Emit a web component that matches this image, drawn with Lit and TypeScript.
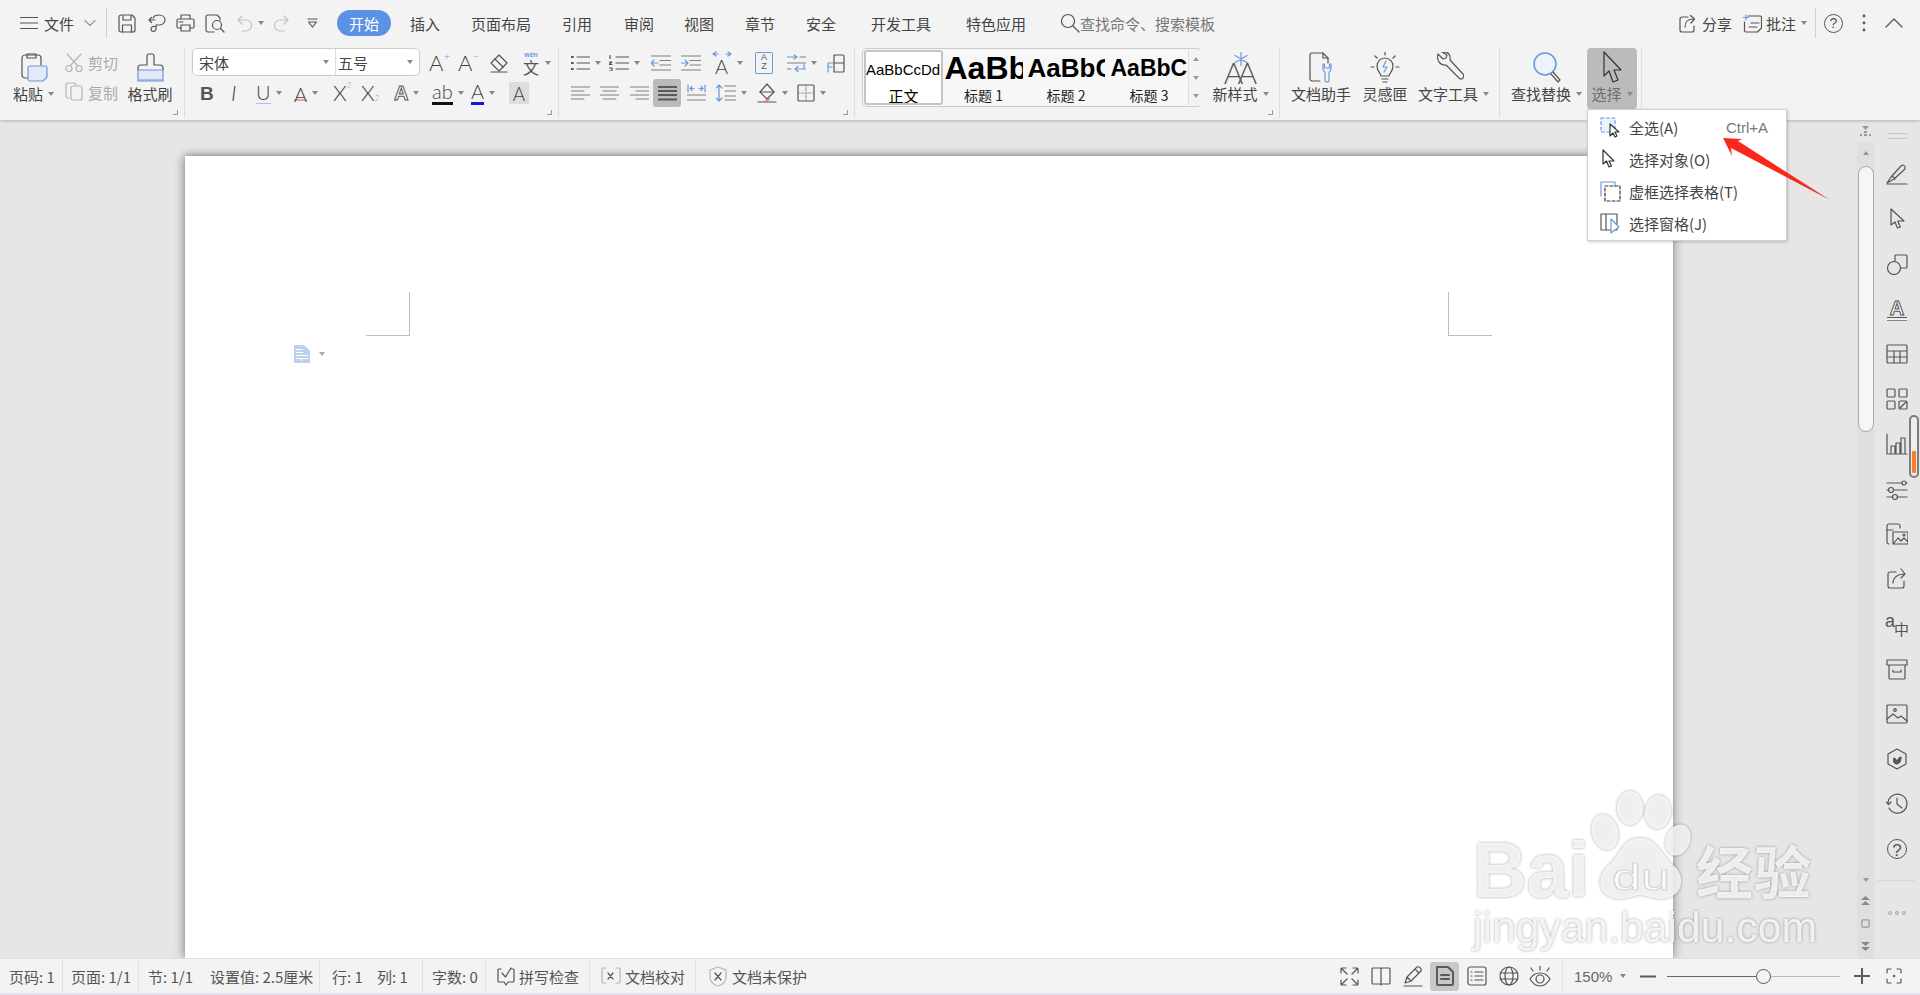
import { LitElement, html, css, svg } from "lit";
import { customElement } from "lit/decorators.js";

const I = (w: number, h: number, body: unknown) =>
  html`<svg class="i" width=${w} height=${h} viewBox="0 0 ${w} ${h}">${body}</svg>`;
const drop = html`<i class="drop"></i>`;
const drop0 = html`<i class="drop d0"></i>`;
const cell = (w: number, c: unknown, d = false, cls = "") =>
  html`<span class="cell ${cls}" style="width:${w}px">${c}${d ? drop : ""}</span>`;
const sit = (w: number, cls: string, c: unknown) =>
  html`<span class="sitem ${cls}" style="width:${w}px">${c}</span>`;

/* title bar */
const icMenu = I(18, 14, svg`<path d="M0 1.5h18M0 7h18M0 12.5h18"/>`);
const icChev = I(12, 8, svg`<path class="g2" d="M1 1.5l5 5 5-5"/>`);
const icSave = I(18, 19, svg`<path d="M1 3a2 2 0 0 1 2-2h11l3 3v12a2 2 0 0 1-2 2H3a2 2 0 0 1-2-2Z"/><path d="M5 1.5V6h8V1.500M4.500 18v-7h9v7"/>`);
const icSend = I(18, 19, svg`<path d="M5 4c1-2 3-3 6-3 3.500 0 6 2 6 5s-3 5-6 5H8v4a2.500 2.500 0 1 1-2-2.500h2"/><path d="M1 6h6M3.500 3.500L1 6l2.500 2.500"/>`);
const icPrint = I(19, 18, svg`<path d="M5 5V1h9v4M5 14H2.500A1.500 1.500 0 0 1 1 12.500v-6A1.500 1.500 0 0 1 2.500 5h14A1.500 1.500 0 0 1 18 6.500v6a1.500 1.500 0 0 1-1.500 1.500H14"/><path d="M5 11h9v6H5ZM3 8h4"/>`);
const icPrev = I(20, 19, svg`<path d="M9 18H3a2 2 0 0 1-2-2V3a2 2 0 0 1 2-2h9l3 3v2"/><circle cx="12" cy="11" r="4.500"/><path d="M15.500 14.500l3.500 3.500"/>`);
const icUndo = I(15, 17, svg`<path class="g3" d="M5 1L1 5l4 4M1 5h8a5 5 0 0 1 0 11H5"/>`);
const icRedo = I(15, 17, svg`<path class="g3" d="M10 1l4 4-4 4M14 5H6a5 5 0 0 0 0 11h4"/>`);
const icCust = I(11, 11, svg`<path d="M1 1h9M1.500 4h8L5.500 9Z"/>`);
const icSearch = I(20, 20, svg`<circle cx="8" cy="8" r="6.500"/><path d="M13 13l6 6"/>`);
const icShare = I(18, 19, svg`<path d="M9 3H3a2 2 0 0 0-2 2v11a2 2 0 0 0 2 2h10a2 2 0 0 0 2-2v-4"/><path d="M6 13c0-5 3-8 8-8M11.500 1.500L15.500 5 12 9"/>`);
const icNote = I(19, 19, svg`<path d="M5 2h12a1.500 1.500 0 0 1 1.500 1.500V14l-4 4H3a1.500 1.500 0 0 1-1.500-1.500V8"/><path d="M8 9h8M6 13h8"/><path class="b" d="M3 1v5M.5 3.500h5"/>`);
const icHelp = html`<span class="circ">?</span>`;
const icKebab = I(4, 18, svg`<circle class="fd" cx="2" cy="2" r=".8"/><circle class="fd" cx="2" cy="9" r=".8"/><circle class="fd" cx="2" cy="16" r=".8"/>`);
const icUp = I(18, 10, svg`<path d="M1 9l8-8 8 8"/>`);

/* ribbon big */
const icPaste = I(28, 29, svg`<path d="M13 25H5a3 3 0 0 1-3-3V5a3 3 0 0 1 3-3h13a3 3 0 0 1 3 3v7"/><path d="M7 5V1h9v4Z"/><path class="b fl" d="M8 15a2 2 0 0 1 2-2h15a2 2 0 0 1 2 2v9l-4 4H10a2 2 0 0 1-2-2Z"/>`);
const icBrush = I(27, 29, svg`<path d="M1 17v-2a3 3 0 0 1 3-3h6V3a2 2 0 0 1 2-2h3a2 2 0 0 1 2 2v9h6a3 3 0 0 1 3 3v2"/><path class="b fl" d="M1 17h25v10H1Z"/><path class="b" d="M0 28h27"/>`);
const icStyleNew = html`<span class="newst">${I(14, 14, svg`<path class="b" d="M7 0v14M1 3.500l12 7M13 3.500l-12 7"/>`)}<span class="aa"><span>A</span><span>A</span></span></span>`;
const icAssist = I(26, 31, svg`<path d="M12 29H4a2 2 0 0 1-2-2V3a2 2 0 0 1 2-2h11l5 5v5"/><path d="M15 1v5h5"/><path class="b" d="M15 12v5a3 3 0 0 0 2 3v8a2 2 0 0 0 4 0v-8a3 3 0 0 0 2-3v-5l-1.500 0v4h-5v-4Z"/>`);
const icBulb = I(30, 31, svg`<path d="M15 0v3M5 4l2 2M25 4l-2 2M1 15h3M26 15h3"/><path d="M11 24c0-3-4-4-4-10a8 8 0 0 1 16 0c0 6-4 7-4 10Z"/><path d="M12 27h6M13 30h4"/><path class="b" d="M16 9l-3 6h4l-3 5"/>`);
const icWrench = I(29, 31, svg`<path d="M3 2l5 5 3-1 1-3-5-3c6-1 9 3 8 8l13 14c1 2 1 3 0 4s-3 2-4 0L11 13C6 14 1 9 3 2Z"/>`);
const icFind = I(29, 31, svg`<circle class="b flp" cx="12" cy="12" r="11"/><path d="M20 20l7 8-2 2-7-8"/>`);
const icCursorBig = I(20, 33, svg`<path class="dk" d="M2 1v24l5-5 4 11 5-2-4-10h7Z"/>`);

/* small left */
const icCut = I(18, 19, svg`<g class="g2s"><path d="M2 1l11 12M16 1L5 13"/><circle cx="4" cy="15.500" r="3"/><circle cx="14" cy="15.500" r="3"/></g>`);
const icCopy = I(18, 20, svg`<g class="g2s"><path d="M5 16H3a2 2 0 0 1-2-2V3a2 2 0 0 1 2-2h6a2 2 0 0 1 2 2"/><path d="M6 6a2 2 0 0 1 2-2h7a2 2 0 0 1 2 2v10a2 2 0 0 1-2 2H8a2 2 0 0 1-2-2Z"/></g>`);
const icErase = I(20, 20, svg`<path d="M2 10l8-8 8 8-8 8Z"/><path d="M6 6l8 8M2 19h16"/>`);

const gl = (t: string, cls = "") => html`<span class="g ${cls}">${t}</span>`;
const gA = (t: string, sup: string, cls = "") => html`<span class="g ${cls}">${t}<span class="sup">${sup}</span></span>`;
const wen = html`<span class="wen"><b>wén</b><span>文</span></span>`;
const under = (t: string, c: string, cls = "") => html`<span class="ul ${c}"><span class="g ${cls}">${t}</span></span>`;

const alignL = I(19, 14, svg`<path class="g2s2" d="M0 1h19M0 5h13M0 9h19M0 13h13"/>`);
const alignC = I(19, 14, svg`<path class="g2s2" d="M0 1h19M3 5h13M0 9h19M3 13h13"/>`);
const alignR = I(19, 14, svg`<path class="g2s2" d="M0 1h19M6 5h13M0 9h19M6 13h13"/>`);
const alignJ = I(19, 15, svg`<path class="th" d="M0 1h19M0 5h19M0 9h19M0 13.500h19"/>`);
const alignD = I(19, 18, svg`<path class="b" d="M1 1v7M18 1v7M3 4.500h4M12 4.500h4M3 4.500l2-2M3 4.500l2 2M16 4.500l-2-2M16 4.500l-2 2"/><path class="g2s2" d="M0 11h19M0 16h19"/>`);
const icBullet = I(19, 16, svg`<path d="M6 2h13M6 8h13M6 14h13"/><path class="th" d="M0 2h2M0 8h2M0 14h2"/>`);
const icNum = I(20, 16, svg`<path d="M7 2h13M7 8h13M7 14h13"/><path d="M1 .5v3M0 7h3l-3 2.500h3M0 13h3v3H0"/>`);
const icIndL = I(20, 16, svg`<path class="g2s2" d="M0 1h20M9 5.500h11M9 10h11M0 15h20"/><path class="b" d="M7 8H0M3 5L0 8l3 3"/>`);
const icIndR = I(20, 16, svg`<path class="g2s2" d="M0 1h20M9 5.500h11M9 10h11M0 15h20"/><path class="b" d="M0 8h7M4 5l3 3-3 3"/>`);
const icDirA = html`<span class="dira">${I(20, 6, svg`<path class="b" d="M1 3l3-2M1 3l3 2M1 3h5M19 3l-3-2M19 3l-3 2M19 3h-5"/>`)}<span class="g">A</span></span>`;
const icSort = html`<span class="sort"><b>A</b><b>Z</b></span>`;
const icWrap = I(19, 19, svg`<path class="b" d="M0 3h10M7 1l3 2-3 2M19 15H8M11 12.500L8 15l3 2.500M17 15V10"/><path class="g2s2" d="M13 3h6M0 9h19M0 15h4"/>`);
const icTblL = I(18, 19, svg`<path d="M7 1h9a1 1 0 0 1 1 1v15a1 1 0 0 1-1 1H7M7 1v17M7 9h10"/><path class="b" d="M6 9H1v9M1 13h4"/>`);
const icSpace = I(20, 18, svg`<path class="b" d="M3 1v16M0 4l3-3 3 3M0 14l3 3 3-3"/><path class="g2s2" d="M9 2h11M9 7h11M9 12h11M9 16h11"/>`);
const icShade = I(20, 20, svg`<path d="M10 1l7 8-7 7-7-7Z"/><path d="M3 9h14"/><path d="M1 19h18"/><path class="r" d="M8 19l4-3"/>`);
const icBorder = I(18, 18, svg`<path d="M2 1h14a1 1 0 0 1 1 1v14a1 1 0 0 1-1 1H2a1 1 0 0 1-1-1V2a1 1 0 0 1 1-1Z"/><path class="dash" d="M9 1v16M1 9h16"/>`);

/* menu */
const mAll = I(21, 21, svg`<path class="b dash2 flb" d="M1 1h14v14H1Z"/><path class="dk wfill" d="M10 7v12l3-3 2 4 2-1-2-4h4Z"/>`);
const mObj = I(18, 20, svg`<path class="dk" d="M3 1v14l3.500-3L9 18l2.500-1-2.500-5h5Z"/>`);
const mTbl = I(21, 21, svg`<path class="b" d="M1 15V1h14v4"/><path class="dk dash3" d="M5 5h15v15H5Z"/>`);
const mPane = I(21, 21, svg`<path d="M1 1h16v16H1ZM6 1v16"/><path class="b wfill" d="M11 6v14l3-2.500L19 14Z"/>`);

/* side */
const S = (b: unknown) => I(22, 22, b);
const sPen = S(svg`<path d="M1 20l4-6L15 3c2-2 5 0 4 3L8 16ZM6 13l3 3"/><path d="M1 21h20"/>`);
const sCur = S(svg`<path d="M5 1v16l4-3 2.500 6 2.800-1-2.500-6H18Z"/>`);
const sShape = S(svg`<path d="M9 8V3a1 1 0 0 1 1-1h10a1 1 0 0 1 1 1v11a1 1 0 0 1-1 1h-5"/><circle cx="8" cy="15" r="6.500"/>`);
const sA = html`<span class="sa"><span>A</span></span>`;
const sTable = S(svg`<path d="M2 2h18a1 1 0 0 1 1 1v16a1 1 0 0 1-1 1H2a1 1 0 0 1-1-1V3a1 1 0 0 1 1-1ZM1 8h20M1 14h20M8 8v12M14 8v12"/>`);
const sGrid = S(svg`<rect x="1" y="1" width="8" height="8" rx="1"/><rect x="13" y="1" width="8" height="8" rx="1"/><rect x="1" y="13" width="8" height="8" rx="1"/><rect x="13" y="13" width="8" height="8" rx="1"/><path d="M14 20l6-6"/>`);
const sChart = S(svg`<path d="M1 1v20h20M5 20v-7h4v7M10 20v-10h4v10M15 20V5h4v15"/>`);
const sSlide = S(svg`<path d="M1 5h15M20 5h1M1 12h2M8 12h13M1 19h5M11 19h10"/><circle cx="18" cy="5" r="2"/><circle cx="5" cy="12" r="2.500"/><circle cx="9" cy="19" r="2.500"/>`);
const sImgs = S(svg`<path d="M3 21a2 2 0 0 1-2-2V3a2 2 0 0 1 2-2h9a2 2 0 0 1 2 2v2"/><path d="M7 9h15v12H7ZM8 20l4-5 3 3 3-3 4 4"/><circle cx="18" cy="12" r="1"/><path d="M1 7h6"/>`);
const sShare = S(svg`<path d="M10 4H4a2 2 0 0 0-2 2v12a2 2 0 0 0 2 2h12a2 2 0 0 0 2-2v-5"/><path d="M7 15c0-5 4-9 12-9M15 1l4 5-4 4"/>`);
const sTrans = html`<span class="trans"><span>a</span><b>中</b></span>`;
const sBox = S(svg`<path d="M1 2h20v5H1ZM3 7v13a1 1 0 0 0 1 1h14a1 1 0 0 0 1-1V7M7 12v2h8v-2"/>`);
const sPic = S(svg`<rect x="1" y="2" width="20" height="18" rx="1"/><path d="M1 16l6-5 5 4 3-2 6 5"/><circle cx="9" cy="7" r="1.300"/>`);
const sHex = S(svg`<path d="M11 1l9 5v10l-9 5-9-5V6Z"/><path class="fd" d="M11 16c-3 0-4-3-3-6 2 1 3 3 3 6ZM11 16c0-3 1-6 4-7 0 4-1 6-4 7Z"/>`);
const sHist = S(svg`<path d="M3 15a9.500 9.500 0 1 0-1-5M0 9l2.500 2.500L5 9M11 5v6l5 4"/>`);
const sHelp = html`<span class="circ big">?</span>`;

/* status */
const stSpell = I(18, 19, svg`<path d="M4 2H2a1 1 0 0 0-1 1v11a1 1 0 0 0 1 1h5l2 3 2-3h5a1 1 0 0 0 1-1V3a1 1 0 0 0-1-1h-2"/><path d="M5 6l3.500 4L14 1"/>`);
const stProof = I(20, 18, svg`<g class="g2s"><path d="M5 1H2a1 1 0 0 0-1 1v13a1 1 0 0 0 1 1h3M15 1h3a1 1 0 0 1 1 1v13a1 1 0 0 1-1 1h-3"/></g><path d="M7 6l5 6M12 6l-5 6"/>`);
const stShield = I(18, 21, svg`<g class="g2s"><path d="M9 1l8 3v7c0 4-3 8-8 9-5-1-8-5-8-9V4Z"/></g><path d="M6 7l6 7M12 7l-6 7"/>`);
const bFull = I(19, 19, svg`<path d="M6 1H2a1 1 0 0 0-1 1v4M13 1h4a1 1 0 0 1 1 1v4M1 13v4a1 1 0 0 0 1 1h4M18 13v4a1 1 0 0 1-1 1h-4M7 7L2 2M12 7l5-5M7 12l-5 5M12 12l5 5"/>`);
const bBook = I(20, 20, svg`<path d="M10 3a1 1 0 0 0-1-1H2a1 1 0 0 0-1 1v14a1 1 0 0 0 1 1h7a1 1 0 0 1 1 1 1 1 0 0 1 1-1h7a1 1 0 0 0 1-1V3a1 1 0 0 0-1-1h-7a1 1 0 0 0-1 1v16"/>`);
const bPen = I(20, 21, svg`<path d="M2 17l2-6L14 1c2-1 5 2 4 4L8 15Zm2-6l4 4M12 3l4 4"/><path d="M1 20h18"/>`);
const bPage = I(20, 20, svg`<path class="th" d="M2 1h11l5 5v12a1 1 0 0 1-1 1H3a1 1 0 0 1-1-1ZM6 9h8M6 13h8"/>`);
const bOut = I(20, 20, svg`<rect x="1" y="1" width="18" height="18" rx="2"/><path d="M8 6h8M8 10h8M8 14h8M4 6h1M4 10h1M4 14h1"/>`);
const bGlobe = I(20, 20, svg`<circle cx="10" cy="10" r="9"/><ellipse cx="10" cy="10" rx="4" ry="9"/><path d="M1 7h18M1 13h18"/>`);
const bEye = I(22, 21, svg`<path d="M1 13c3-5 6-6 10-6s7 1 10 6c-3 5-6 7-10 7s-7-2-10-7Z"/><circle cx="11" cy="13" r="4"/><path d="M4 5L2 2M11 4V0M18 5l2-3"/>`);
const bMinus = I(16, 3, svg`<path class="th" d="M0 1.500h16"/>`);
const bPlus = I(16, 16, svg`<path class="th" d="M0 8h16M8 0v16"/>`);
const bFocus = I(16, 16, svg`<path d="M5 1H2a1 1 0 0 0-1 1v3M11 1h3a1 1 0 0 1 1 1v3M1 11v3a1 1 0 0 0 1 1h3M15 11v3a1 1 0 0 1-1 1h-3"/><circle class="fd" cx="8" cy="8" r=".6"/>`);

@customElement("app-root")
export class AppRoot extends LitElement {
  static styles = css`
    :host { display:block; position:relative; width:1920px; height:995px; overflow:hidden; background:#e6e6e6; font-family:"Noto Sans CJK SC","Liberation Sans",sans-serif; font-size:15px; color:#444; }
    .app { display:flex; flex-direction:column; height:995px; }
    svg.i { fill:none; stroke:#555; stroke-width:1.2; stroke-linecap:round; stroke-linejoin:round; flex:none; display:block; }
    svg .b { stroke:#6c98de; } svg .fl { fill:#e3e9f6; } svg .flp { fill:#eef2fa; stroke-width:1.6; } svg .flb { fill:#eef2fa; }
    svg .g2 { stroke:#999; } svg .g3 { stroke:#c4c4c4; } svg .g2s { stroke:#b5b5b5; } svg .g2s2 { stroke:#808080; }
    svg .fd { fill:#555; } svg .th { stroke-width:2; stroke:#5a5a5a; } svg .dk { stroke:#333; } svg .r { stroke:#e87b7b; stroke-width:2; }
    svg .wfill { fill:#fff; } svg .dash { stroke-dasharray:2 1.500; stroke:#999; } svg .dash2 { stroke-dasharray:3 2.500; } svg .dash3 { stroke-dasharray:3 2; }

    .ribbon { height:120px; flex:none; background:#f3f3f3; box-shadow:0 1px 3px rgba(0,0,0,.22); position:relative; z-index:2; }
    .tabs { height:46px; display:flex; align-items:center; padding:0 0 0 20px; box-sizing:border-box; }
    .cell { display:inline-flex; align-items:center; flex:none; white-space:nowrap; height:100%; }
    .drop { display:inline-block; width:0; height:0; margin-left:5px; border:3px solid transparent; border-top:4px solid #888; border-bottom:0; flex:none; }
    .drop.d0 { margin-left:0; } .drop.d2 { margin-left:2px; }
    .vbar { width:1px; height:30px; background:#cfcfcf; }
    .pill { display:inline-flex; align-items:center; justify-content:center; width:54px; height:26px; border-radius:13px; background:#5b92e5; color:#fff; }
    .hint { color:#777; }
    .spacer { flex:1; }
    .circ { display:inline-flex; align-items:center; justify-content:center; width:17px; height:17px; border:1.300px solid #555; border-radius:50%; font:14px "Liberation Sans",sans-serif; color:#555; }
    .circ.big { width:20px; height:20px; font-size:17px; }
    .ml6 { margin-left:6px; display:block; } .ml7 { margin-left:7px; display:block; }

    .tools { height:74px; display:flex; padding-top:2px; box-sizing:border-box; }
    .grp { position:relative; flex:none; height:70px; display:flex; box-sizing:border-box; border-right:1px solid #dedede; }
    .grp.g1 { width:185px; padding-left:13px; } .grp.g2 { width:374px; padding-left:7px; flex-direction:column; }
    .grp.g3 { width:296px; padding-left:12px; flex-direction:column; } .grp.g4 { width:425px; padding-left:7px; }
    .grp.g5 { width:220px; padding-left:11px; } .grp.g6 { width:142px; padding-left:11px; }
    .launch { position:absolute; right:6px; bottom:3px; width:4px; height:4px; border-right:1.500px solid #999; border-bottom:1.500px solid #999; }
    .big { display:flex; flex-direction:column; align-items:center; flex:none; padding-top:4px; box-sizing:border-box; }
    .ico { height:30px; display:flex; align-items:center; justify-content:center; }
    .ico.pl7 { padding-left:7px; } .ico.mr8 { margin-right:8px; } .ico.pl22 { padding-left:22px; }
    .lbl { display:flex; align-items:center; line-height:20px; margin-top:2px; white-space:nowrap; }
    .w40 { width:40px; align-items:flex-start; } .w44 { width:44px; } .w60 { width:60px; }
    .sm { width:63px; margin:-1px 0 0 12px; display:flex; flex-direction:column; flex:none; }
    .smr { height:30px; display:flex; align-items:center; gap:5px; color:#aaa; }
    .row { height:30px; display:flex; align-items:center; }
    .r2 { padding-left:8px; }
    .combo { display:flex; width:228px; height:28px; box-sizing:border-box; background:#fff; border:1px solid #ccc; border-radius:5px; margin:-2px 9px 0 0; flex:none; }
    .combo span { display:flex; align-items:center; justify-content:space-between; box-sizing:border-box; }
    .combo .f1 { width:143px; padding:0 6px 0 6px; border-right:1px solid #ddd; }
    .combo .f2 { flex:1; padding:0 6px 0 2px; }
    .g { font:300 22px/1 Lato,"Liberation Sans",sans-serif; color:#444; position:relative; display:inline-block; }
    .g .sup { position:absolute; left:100%; top:-2px; font-size:11px; color:#6c98de; }
    .g.bo { font:700 19px/1 "Liberation Sans",sans-serif; color:#555; } .g.it { font-style:italic; }
    .g.outl { color:#fff; -webkit-text-stroke:1px #555; font:700 20px/1 "Liberation Sans",sans-serif; }
    .g.xs .sup { top:-1px; font-size:8px; } .g.xb .sup { top:12px; font-size:8px; }
    .ul { display:inline-flex; flex-direction:column; align-items:center; padding-bottom:1px; }
    .ul.blue2 { border-bottom:1px solid #a9c2ec; } .ul.red { border-bottom:2px solid #e9a0a0; margin-bottom:2px; } .ul.red .g { margin-bottom:-6px; }
    .ul.black { border-bottom:3px solid #111; } .ul.blue { border-bottom:3px solid #1515e6; }
    .ul .g { font-size:20px; }
    .shade { display:inline-flex; width:20px; height:22px; align-items:center; justify-content:center; background:#ddd; }
    .shade .g { font-size:19px; }
    .wen { display:inline-flex; flex-direction:column; align-items:center; width:18px; line-height:1; }
    .wen b { font:700 7px/8px "Liberation Sans",sans-serif; color:#6c98de; } .wen span { font-size:16px; line-height:16px; color:#555; }
    .dira { display:inline-flex; flex-direction:column; align-items:center; width:21px; } .dira .g { margin-top:-1px; font-size:20px; }
    .sort { display:inline-flex; flex-direction:column; align-items:center; width:18px; height:22px; box-sizing:border-box; border:1px solid #6c98de; border-radius:2px; }
    .sort b { font:9px/9px "Liberation Sans",sans-serif; color:#5a5a5a; }
    .act { display:inline-flex; align-items:center; justify-content:center; width:28px; height:28px; background:#bbb; border-radius:3px; }

    .gallery { display:flex; flex:none; width:340px; height:59px; box-sizing:border-box; border:1px solid #ccc; border-radius:5px; padding:1px 0 1px 1px; background:#f7f7f7; }
    .st { flex:none; display:flex; flex-direction:column; align-items:center; box-sizing:border-box; overflow:hidden; color:#111; }
    .st.on { width:79px; background:#fff; border:2px solid #c4c4c4; border-radius:3px; }
    .sam { height:36px; display:flex; align-items:center; justify-content:flex-start; overflow:hidden; white-space:nowrap; font-family:"Liberation Sans",sans-serif; font-weight:700; color:#000; line-height:1; flex:none; }
    .nm { line-height:18px; font-size:14px; color:#222; }
    .s0 { font-size:15px; font-weight:400; height:35px; width:75px; } .s1 { font-size:32px; width:78px; } .s2 { font-size:26px; width:77px; } .s3 { font-size:23px; width:77px; }
    .st.on .nm { font-size:15px; color:#000; }
    .w81 { width:81px; } .w82 { width:82px; margin-left:1px; } .w78 { width:78px; margin-left:3px; }
    .gs { margin-left:auto; width:15px; flex:none; display:flex; flex-direction:column; gap:1px; }
    .gs span { flex:1; display:flex; align-items:center; justify-content:center; border-left:1px solid #ddd; background:#f3f3f3; }
    .up { width:0; height:0; border:3.500px solid transparent; border-bottom:4px solid #999; border-top:0; display:block; }
    .dn { width:0; height:0; border:3.500px solid transparent; border-top:4px solid #999; border-bottom:0; display:block; }
    .newst { position:relative; display:flex; flex-direction:column; align-items:center; width:32px; height:31px; }
    .newst svg { margin-bottom:-6px; }
    .aa { display:flex; font:300 30px/24px Lato,"Liberation Sans",sans-serif; color:#555; } .aa span { margin:0 -3px; }
    .ms { margin-left:11px; width:55px; }
    .selbox { width:50px; height:61px; flex:none; background:#bbb; border-radius:4px; color:#777; }
    .selbox .lbl { color:#6e6e6e; }
    .m12 { margin-left:12px; } .m13 { margin-left:13px; } .w76 { width:76px; align-items:flex-start; } .w67 { width:67px; }

    .mid { flex:1; display:flex; min-height:0; position:relative; }
    .canvas { flex:1; min-width:0; display:flex; padding:36px 184px 0 185px; box-sizing:border-box; }
    .page { flex:1; background:#fff; position:relative; box-shadow:-2px 0 10px rgba(0,0,0,.28), 2px 0 10px rgba(0,0,0,.2), 0 -1px 3px rgba(0,0,0,.1); }
    .crop { position:absolute; top:136px; width:44px; height:44px; box-sizing:border-box; border-bottom:1px solid #bdbdbd; }
    .crop.l { left:181px; border-right:1px solid #bdbdbd; } .crop.r { left:1263px; border-left:1px solid #bdbdbd; }
    .para { position:absolute; left:109px; top:189px; display:flex; align-items:center; gap:9px; }
    .para svg { stroke:none; } .para .drop { margin:0; border-top-color:#aaa; }
    .vs { width:17px; flex:none; display:flex; flex-direction:column; }
    .split { height:22px; display:flex; align-items:center; justify-content:center; flex:none; }
    .track { flex:1; background:#dfdfdf; display:flex; flex-direction:column; align-items:center; padding-top:9px; box-sizing:border-box; }
    .thumb { width:16px; height:266px; margin-top:11px; box-sizing:border-box; background:#f6f6f6; border:1px solid #aaa; border-radius:8px; flex:none; }
    .vb { margin-top:auto; display:flex; flex-direction:column; align-items:center; gap:14px; padding-bottom:6px; }
    .vb svg { stroke:none; }
    .side { width:46px; flex:none; display:flex; flex-direction:column; align-items:center; }
    .hnd { height:31px; flex:none; display:flex; flex-direction:column; justify-content:center; gap:4px; padding-top:1px; box-sizing:border-box; }
    .hnd i { display:block; width:20px; height:1px; background:#c8c8c8; }
    .sc { height:45px; flex:none; display:flex; align-items:center; justify-content:center; width:100%; }
    .sdiv { width:38px; height:1px; background:#d6d6d6; margin-top:9px; margin-left:-3px; flex:none; }
    .dots { margin-top:30px; display:flex; gap:3px; } .dots i { width:4px; height:4px; border:1px solid #aaa; border-radius:50%; box-sizing:border-box; display:block; background:#ddd; }
    .sa { display:inline-flex; flex-direction:column; align-items:center; width:20px; }
    .sa span { font:700 20px/18px "Liberation Sans",sans-serif; color:#fff; -webkit-text-stroke:1px #555; border-bottom:1px solid #555; box-shadow:0 2px 0 #f0f0f0, 0 3px 0 #888; width:20px; text-align:center; }
    .trans { display:inline-flex; align-items:flex-end; width:24px; color:#555; line-height:1; }
    .trans span { font:18px/18px "Liberation Sans",sans-serif; margin-bottom:6px; } .trans b { font-weight:400; font-size:15px; margin-left:-1px; }
    .ind { position:absolute; left:1909px; top:295px; width:10px; height:63px; box-sizing:border-box; border:2px solid #7c7c7c; border-radius:5px; background:#eee; display:flex; align-items:flex-end; justify-content:center; padding-bottom:3px; }
    .ind i { display:block; width:4px; height:22px; background:#f58028; border-radius:1px; }

    .status { height:35px; flex:none; display:flex; align-items:center; background:#f3f3f3; border-top:1px solid #ddd; box-sizing:border-box; position:relative; z-index:2; font-size:15px; color:#555; }
    .sp { width:1px; height:30px; background:#e0e0e0; flex:none; }
    .sitem { display:inline-flex; align-items:center; gap:4px; flex:none; white-space:nowrap; height:100%; box-sizing:border-box; }
    .p9 { padding-left:9px; } .p8 { padding-left:8px; } .p12 { padding-left:12px; } .p11 { padding-left:11px; } .p13 { padding-left:13px; gap:5px; }
    .actb { display:inline-flex; align-items:center; justify-content:center; width:29px; height:29px; background:#c8c8c8; border-radius:3px; margin-right:8px; flex:none; }
    .zoom { color:#666; font-family:"Liberation Sans",sans-serif; font-size:15px; }
    .sl { width:173px; display:flex; align-items:center; flex:none; }
    .sl .a { width:89px; height:1px; background:#666; } .sl .c { flex:1; height:1px; background:#bbb; }
    .sl .t { width:15px; height:15px; flex:none; box-sizing:border-box; border:1.300px solid #555; border-radius:50%; background:#f3f3f3; }
    .foot { height:2px; flex:none; background:#e2e2ea; }

    .menu { position:absolute; left:1587px; top:109px; z-index:3; width:200px; height:132px; box-sizing:border-box; background:#fff; border:1px solid #d0d0d0; box-shadow:1px 1px 3px rgba(0,0,0,.2); padding-top:1px; }
    .mi { height:32px; display:flex; align-items:center; padding-left:12px; color:#444; }
    .mi .mic { width:29px; flex:none; display:flex; } .mi .k { margin-left:auto; margin-right:18px; color:#777; font-family:"Liberation Sans",sans-serif; }
    .arrow { position:absolute; left:0; top:0; z-index:4; pointer-events:none; }
    .wm { position:absolute; left:1440px; top:760px; z-index:1; pointer-events:none; filter:drop-shadow(0 0 1.500px rgba(0,0,0,.42)); }
    .wm text, .wm ellipse, .wm path { fill:#fff; fill-opacity:.82; }
    .wm .hi { fill:#fff; stroke:#d4d4d4; stroke-width:1; }
    .wm .wt { font-family:"Liberation Sans",sans-serif; }
    .wm .wc { font-family:"Noto Sans CJK SC",sans-serif; font-weight:700; }
  `;

  render() {
    const tab = (w: number, t: string) => cell(w, t);
    return html`
      <div class="app">
        <div class="ribbon">
          <div class="tabs">
            ${cell(24, icMenu)}${cell(40, "文件")}${cell(22, icChev)}
            ${cell(12, html`<span class="vbar"></span>`)}
            ${cell(30, icSave)}${cell(28, icSend)}${cell(29, icPrint)}${cell(32, icPrev)}
            ${cell(21, icUndo)}${cell(16, drop0)}${cell(33, icRedo)}${cell(30, icCust)}
            ${cell(73, html`<span class="pill">开始</span>`)}
            ${tab(61, "插入")}${tab(91, "页面布局")}${tab(62, "引用")}${tab(60, "审阅")}${tab(61, "视图")}${tab(61, "章节")}${tab(65, "安全")}${tab(95, "开发工具")}${tab(94, "特色应用")}
            ${cell(20, icSearch)}<span class="hint">查找命令、搜索模板</span>
            <span class="spacer"></span>
            ${cell(23, icShare)}${cell(41, "分享")}${cell(23, icNote)}${cell(33, "批注")}${cell(16, html`<i class="drop d2"></i>`)}
            ${cell(9, html`<span class="vbar"></span>`)}
            ${cell(32, icHelp)}${cell(22, html`<span class="ml6">${icKebab}</span>`)}
            ${cell(42, html`<span class="ml7">${icUp}</span>`)}
          </div>
          <div class="tools">
            <div class="grp g1">
              <div class="big w40"><div class="ico pl7">${icPaste}</div><div class="lbl">粘贴${drop}</div></div>
              <div class="sm">
                <div class="smr">${icCut}<span>剪切</span></div>
                <div class="smr">${icCopy}<span>复制</span></div>
              </div>
              <div class="big w44"><div class="ico">${icBrush}</div><div class="lbl">格式刷</div></div>
              <i class="launch"></i>
            </div>
            <div class="grp g2">
              <div class="row">
                <div class="combo"><span class="f1">宋体<i class="drop"></i></span><span class="f2">五号<i class="drop"></i></span></div>
                ${cell(29, gA("A", "+"))}${cell(31, gA("A", "–"))}${cell(33, icErase)}${cell(32, wen, true)}
              </div>
              <div class="row r2">
                ${cell(31, gl("B", "bo"))}${cell(25, gl("I", "it"))}
                ${cell(38, under("U", "blue2"), true)}${cell(39, under("A", "red"), true)}
                ${cell(28, gA("X", "2", "xs"))}${cell(33, gA("X", "2", "xb"))}
                ${cell(38, gl("A", "outl"), true)}${cell(39, under("ab", "black"), true)}${cell(38, under("A", "blue"), true)}
                ${cell(20, html`<span class="shade">${gl("A")}</span>`)}
              </div>
              <i class="launch"></i>
            </div>
            <div class="grp g3">
              <div class="row">
                ${cell(38, icBullet, true)}${cell(42, icNum, true)}${cell(30, icIndL)}${cell(30, icIndR)}${cell(44, icDirA, true)}${cell(32, icSort)}${cell(40, icWrap, true)}${cell(18, icTblL)}
              </div>
              <div class="row">
                ${cell(29, alignL)}${cell(30, alignC)}${cell(23, alignR)}
                ${cell(34, html`<span class="act">${alignJ}</span>`)}
                ${cell(29, alignD)}${cell(41, icSpace, true)}${cell(40, icShade, true)}${cell(34, icBorder, true)}
              </div>
              <i class="launch"></i>
            </div>
            <div class="grp g4">
              <div class="gallery">
                <div class="st on"><div class="sam s0">AaBbCcDd</div><div class="nm">正文</div></div>
                <div class="st w81"><div class="sam s1">AaBbC</div><div class="nm">标题 1</div></div>
                <div class="st w82"><div class="sam s2">AaBbC</div><div class="nm">标题 2</div></div>
                <div class="st w78"><div class="sam s3">AaBbCc</div><div class="nm">标题 3</div></div>
                <div class="gs"><span><i class="up"></i></span><span><i class="dn"></i></span><span><i class="dn"></i></span></div>
              </div>
              <div class="big ms"><div class="ico">${icStyleNew}</div><div class="lbl">新样式${drop}</div></div>
              <i class="launch"></i>
            </div>
            <div class="grp g5">
              <div class="big w60"><div class="ico">${icAssist}</div><div class="lbl">文档助手</div></div>
              <div class="big w44 m12"><div class="ico">${icBulb}</div><div class="lbl">灵感匣</div></div>
              <div class="big w67 m13"><div class="ico mr8">${icWrench}</div><div class="lbl">文字工具${drop}</div></div>
            </div>
            <div class="grp g6">
              <div class="big w76"><div class="ico pl22">${icFind}</div><div class="lbl">查找替换${drop}</div></div>
              <div class="big selbox"><div class="ico">${icCursorBig}</div><div class="lbl">选择${drop}</div></div>
            </div>
          </div>
        </div>

        <div class="mid">
          <div class="canvas">
            <div class="page">
              <span class="crop l"></span><span class="crop r"></span>
              <div class="para">
                ${I(16, 18, svg`<path fill="#bcd0ec" d="M0 0h10l6 6v12H0Z"/><path fill="#fff" d="M2 4h7v1H2ZM2 7h7v1H2ZM2 10h12v1H2ZM2 13h12v1H2ZM7 14h1v2H7Z"/>`)}
                <i class="drop"></i>
              </div>
            </div>
          </div>
          <div class="vs">
            <div class="split">${I(11, 11, svg`<path fill="#999" stroke="none" d="M2 0h7L5.500 4ZM4 5h3v2H4ZM0 8h2v2H0ZM4 8h3v2H4ZM9 8h2v2H9Z"/>`)}</div>
            <div class="track">
              <i class="up"></i>
              <div class="thumb"></div>
              <div class="vb">
                <i class="dn"></i>
                ${I(9, 9, svg`<path fill="#888" stroke="none" d="M4.500 0L9 4H0ZM4.500 5L9 9H0Z"/>`)}
                ${I(9, 9, svg`<rect x=".8" y=".8" width="7.400" height="7.400" rx="1.500" fill="none" stroke="#999" stroke-width="1.200"/>`)}
                ${I(9, 10, svg`<path fill="#888" stroke="none" d="M0 0h9L4.500 4ZM0 5h9L4.500 9Z"/>`)}
              </div>
            </div>
          </div>
          <div class="side">
            <div class="hnd"><i></i><i></i></div>
            ${[sPen, sCur, sShape, sA, sTable, sGrid, sChart, sSlide, sImgs, sShare, sTrans, sBox, sPic, sHex, sHist, sHelp].map((c) => html`<div class="sc">${c}</div>`)}
            <div class="sdiv"></div>
            <div class="dots"><i></i><i></i><i></i></div>
          </div>
          <div class="ind"><i></i></div>
        </div>

        <div class="status">
          ${sit(62, "p9", "页码: 1")}<i class="sp"></i>
          ${sit(75, "p8", "页面: 1/1")}<i class="sp"></i>
          ${sit(71, "p9", "节: 1/1")}
          ${sit(109, "", "设置值: 2.5厘米")}<i class="sp"></i>
          ${sit(57, "p12", "行: 1")}
          ${sit(45, "", "列: 1")}<i class="sp"></i>
          ${sit(62, "p9", "字数: 0")}<i class="sp"></i>
          ${sit(103, "p11", html`${stSpell}拼写检查`)}<i class="sp"></i>
          ${sit(105, "p11", html`${stProof}文档校对`)}<i class="sp"></i>
          ${sit(130, "p13", html`${stShield}文档未保护`)}
          <span class="spacer"></span>
          ${cell(31, bFull)}${cell(32, bBook)}${cell(27, bPen)}
          <span class="actb">${bPage}</span>
          ${cell(32, bOut)}${cell(30, bGlobe)}${cell(33, bEye)}
          <i class="sp"></i>
          ${cell(11, "")}
          <span class="cell zoom" style="width:46px">150%</span>
          ${cell(20, drop0)}
          ${cell(27, bMinus)}
          <div class="sl"><i class="a"></i><i class="t"></i><i class="c"></i></div>
          ${cell(14, "")}${cell(32, bPlus)}${cell(34, bFocus)}
        </div>
        <div class="foot"></div>
      </div>

      <svg class="wm" width="400" height="198" viewBox="0 0 400 198">
        <text class="wt" x="33" y="137" font-size="78" font-weight="700" textLength="116" lengthAdjust="spacingAndGlyphs">Bai</text>
        <ellipse cx="165" cy="72" rx="13" ry="18" transform="rotate(-15 165 72)"/>
        <ellipse cx="190" cy="48" rx="13" ry="17"/>
        <ellipse cx="218" cy="52" rx="13" ry="17" transform="rotate(8 218 52)"/>
        <ellipse cx="238" cy="80" rx="12" ry="16" transform="rotate(20 238 80)"/>
        <path d="M200 78c-18 0-20 18-32 28-12 9-12 34 14 33 8-1 13-4 18-4s12 3 20 4c24 0 26-24 14-33-13-10-16-28-34-28Z"/>
        <text class="wt hi" x="172" y="130" font-size="36" textLength="58" lengthAdjust="spacingAndGlyphs">du</text>
        <text class="wc" x="256" y="134" font-size="57" textLength="115">经验</text>
        <text class="wt" x="33" y="182" font-size="43" textLength="344" lengthAdjust="spacingAndGlyphs">jingyan.baidu.com</text>
      </svg>

      <div class="menu">
        <div class="mi"><span class="mic">${mAll}</span>全选(A)<span class="k">Ctrl+A</span></div>
        <div class="mi"><span class="mic">${mObj}</span>选择对象(O)</div>
        <div class="mi"><span class="mic">${mTbl}</span>虚框选择表格(T)</div>
        <div class="mi"><span class="mic">${mPane}</span>选择窗格(J)</div>
      </div>
      <svg class="arrow" width="1920" height="300" viewBox="0 0 1920 300">
        <path fill="#f9271c" d="M1723 138L1742 139 1738 141 1830 200 1731 148 1732 156Z"/>
      </svg>
    `;
  }
}
